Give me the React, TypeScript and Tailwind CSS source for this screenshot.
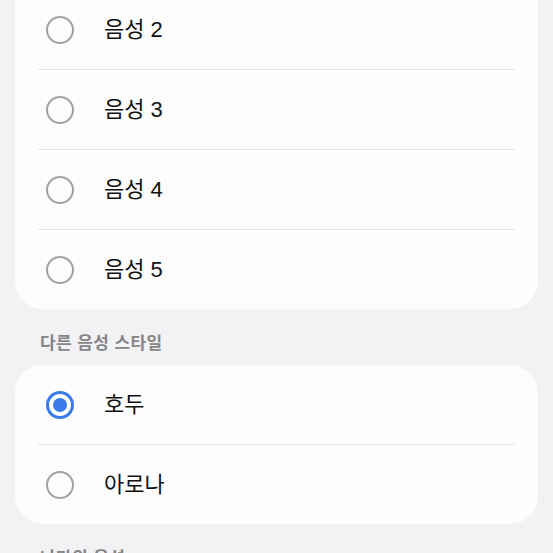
import React, { useState } from "react";

type Voice = { id: string; label: string };

const basicVoices: Voice[] = [
  { id: "v2", label: "음성 2" },
  { id: "v3", label: "음성 3" },
  { id: "v4", label: "음성 4" },
  { id: "v5", label: "음성 5" },
];

const otherVoices: Voice[] = [
  { id: "hodu", label: "호두" },
  { id: "arona", label: "아로나" },
];

function Radio({ checked }: { checked: boolean }) {
  if (checked) {
    return (
      <span className="w-[28px] h-[28px] rounded-full border-[3px] border-[#3a7bea] flex items-center justify-center shrink-0">
        <span className="w-[14px] h-[14px] rounded-full bg-[#3a7bea]" />
      </span>
    );
  }
  return <span className="w-[28px] h-[28px] rounded-full border-2 border-[#a2a2a4] shrink-0" />;
}

function Rows({ items, selected, onSelect }: { items: Voice[]; selected: string; onSelect: (id: string) => void }) {
  return (
    <>
      {items.map((v, i) => (
        <div key={v.id}>
          {i > 0 && <div className="mx-[23px] h-px bg-[#e4e4e6]" />}
          <button
            onClick={() => onSelect(v.id)}
            className="w-full h-[79px] flex items-center pl-[31px] text-left"
          >
            <Radio checked={selected === v.id} />
            <span className="ml-[30px] text-[22px] leading-[26px] text-[#111]">{v.label}</span>
          </button>
        </div>
      ))}
    </>
  );
}

function SectionTitle({ children }: { children: React.ReactNode }) {
  return (
    <div className="px-[40px] h-[56px] pt-[26px] text-[17px] leading-[18px] tracking-[0.4px] font-semibold text-[#858588]">
      {children}
    </div>
  );
}

export default function App() {
  const [selected, setSelected] = useState("hodu");

  return (
    <div
      className="w-[553px] h-[553px] overflow-hidden bg-[#f2f2f4]"
      style={{ fontFamily: '"Liberation Sans", "Noto Sans CJK KR", sans-serif' }}
    >
      <div className="-mt-[10px]">
        <div className="mx-[15px] bg-[#fdfdfd] rounded-b-[28px] overflow-hidden">
          <Rows items={basicVoices} selected={selected} onSelect={setSelected} />
        </div>
        <SectionTitle>다른 음성 스타일</SectionTitle>
        <div className="mx-[15px] bg-[#fdfdfd] rounded-[28px] overflow-hidden">
          <Rows items={otherVoices} selected={selected} onSelect={setSelected} />
        </div>
        <SectionTitle>나만의 음성</SectionTitle>
      </div>
    </div>
  );
}
